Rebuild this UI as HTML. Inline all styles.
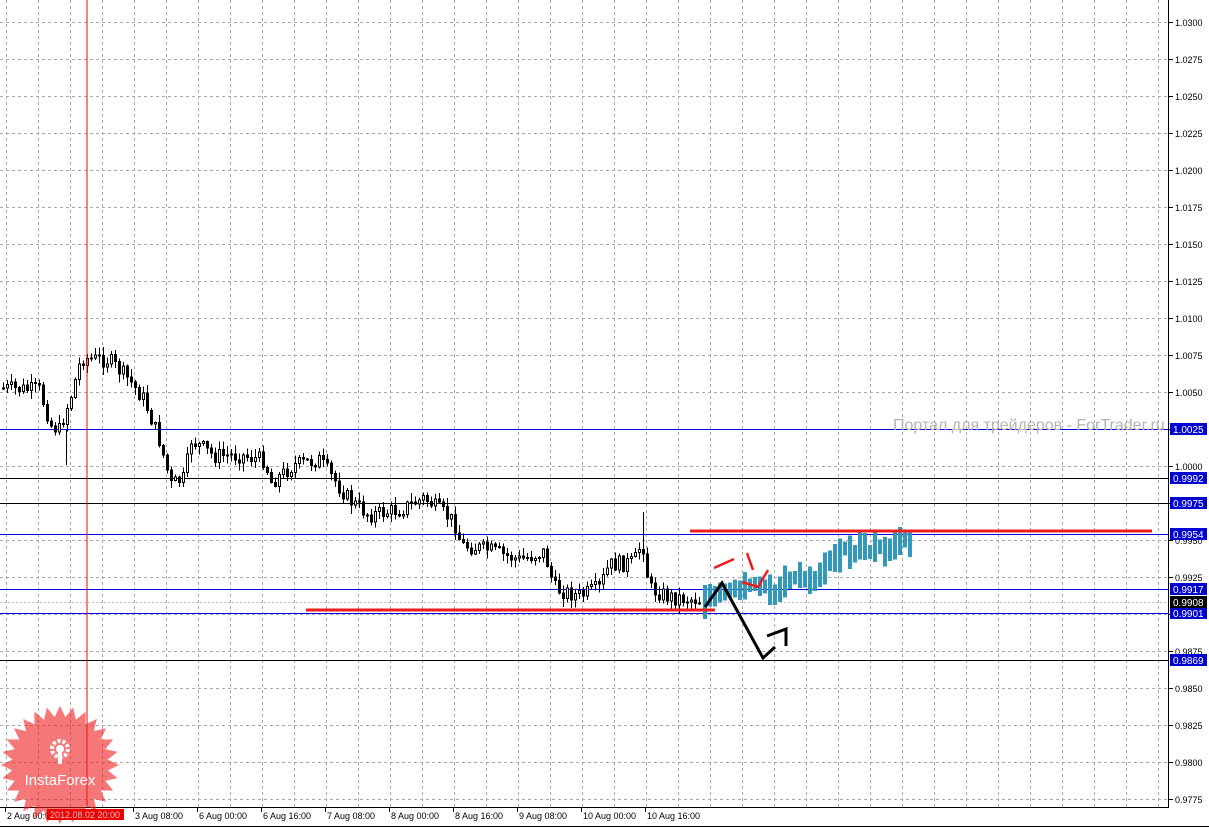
<!DOCTYPE html>
<html><head><meta charset="utf-8"><style>
html,body{margin:0;padding:0;background:#fff;overflow:hidden}
#c{position:absolute;left:0;top:0}
</style></head><body>
<svg id="c" width="1209" height="828" xmlns="http://www.w3.org/2000/svg" font-family="Liberation Sans, sans-serif" shape-rendering="crispEdges">
<rect width="1209" height="828" fill="#fff"/>
<g id="grid" stroke="#a8a8a8" stroke-width="1" stroke-dasharray="3,3"></g>
<g id="hl"></g>
<g id="candles"></g>
<g id="fc"></g>
<text x="893" y="430" font-size="16" fill="#b4b4b4">Портал для трейдеров - ForTrader.ru</text>
<line x1="87" y1="0" x2="87" y2="808" stroke="#ff0000" stroke-width="1.2"/>
<line x1="690" y1="531" x2="1152" y2="531" stroke="#ee1c1c" stroke-width="3"/>
<line x1="306" y1="610" x2="715" y2="610" stroke="#ee1c1c" stroke-width="3"/>
<g shape-rendering="auto">
<polyline points="705,607 722,583 763,658 775,647" fill="none" stroke="#000" stroke-width="3"/>
<polyline points="767,636 786,629 786,646" fill="none" stroke="#000" stroke-width="3"/>
<g stroke="#ee1c1c" stroke-width="2.5" fill="none">
<line x1="714" y1="568" x2="734" y2="559"/>
<line x1="747" y1="553" x2="753" y2="570"/>
<polyline points="742,582 758,587 768,570"/>
</g>
</g>
<line x1="1168.5" y1="0" x2="1168.5" y2="808" stroke="#000"/>
<line x1="0" y1="807.5" x2="1168" y2="807.5" stroke="#000"/>
<line x1="0" y1="826.5" x2="1209" y2="826.5" stroke="#000"/>
<g id="ylab" font-size="9" fill="#000"></g>
<g id="xlab" font-size="9" fill="#000"></g>
<g opacity="0.6" shape-rendering="auto">
<polygon id="star" fill="#ee1c1c"/>
</g>
<g fill="#fff" shape-rendering="auto">
<circle cx="60" cy="749" r="8" fill="none" stroke="#fff" stroke-width="4" stroke-dasharray="3,2"/>
<circle cx="60" cy="749" r="4"/>
<rect x="58" y="752" width="4" height="12"/>
<text x="60" y="785" font-size="15" text-anchor="middle">InstaForex</text>
</g>
<rect x="47" y="809" width="77" height="11" fill="#ee0000"/>
<text x="50" y="818" font-size="9" fill="#f0c0c0">2012.08.02 20:00</text>
</svg>
<script>
var NS="http://www.w3.org/2000/svg";
function el(p,t,a,txt){var e=document.createElementNS(NS,t);for(var k in a)e.setAttribute(k,a[k]);if(txt)e.textContent=txt;document.getElementById(p).appendChild(e);return e;}
function Y(p){return 22+(1.03-p)*14800;}
for(var gx=6;gx<1168;gx+=32)el("grid","line",{x1:gx+.5,y1:0,x2:gx+.5,y2:807});
for(var i=0;i<=21;i++){var p=1.03-i*0.0025,yy=Math.round(Y(p));
 el("grid","line",{x1:0,y1:yy+.5,x2:1168,y2:yy+.5});
 el("ylab","line",{x1:1168,y1:yy+.5,x2:1173,y2:yy+.5,stroke:"#000"});
 el("ylab","text",{x:1175,y:yy+4},p.toFixed(4));}
var lv=[[1.0025,"#0000e0"],[0.9992,"#000000"],[0.9975,"#000000"],[0.9954,"#0000e0"],[0.9917,"#0000e0"],[0.9901,"#0000e0"],[0.9869,"#000000"]];
lv.forEach(function(l){var yy=Math.round(Y(l[0]));
 el("hl","rect",{x:0,y:yy,width:1168,height:1,fill:l[1]});
 el("ylab","rect",{x:1170,y:yy-6,width:37,height:12,fill:"#0000d0"});
 el("ylab","text",{x:1173,y:yy+4,fill:"#fff","font-size":"10"},l[0].toFixed(4));});
var y8=Math.round(Y(0.9908));
el("hl","line",{x1:0,y1:y8+.5,x2:1168,y2:y8+.5,stroke:"#c0c0c0","stroke-dasharray":"2,2"});
el("ylab","rect",{x:1170,y:y8-6,width:37,height:12,fill:"#000"});
el("ylab","text",{x:1173,y:y8+4,fill:"#fff","font-size":"10"},"0.9908");
var xl=[[5,"2 Aug 00:00"],[133,"3 Aug 08:00"],[197,"6 Aug 00:00"],[261,"6 Aug 16:00"],[325,"7 Aug 08:00"],[389,"8 Aug 00:00"],[453,"8 Aug 16:00"],[517,"9 Aug 08:00"],[581,"10 Aug 00:00"],[645,"10 Aug 16:00"]];
xl.forEach(function(a){el("xlab","line",{x1:a[0]+.5,y1:808,x2:a[0]+.5,y2:812,stroke:"#000"});el("xlab","text",{x:a[0]+2,y:819},a[1]);});
var A=[[0,388],[40,390],[52,425],[60,430],[72,395],[82,358],[110,360],[130,380],[145,400],[160,440],[172,485],[185,478],[192,440],[215,456],[240,455],[265,460],[272,482],[295,465],[320,460],[335,480],[350,500],[370,515],[400,510],[425,498],[440,510],[455,522],[462,545],[490,550],[520,560],[545,552],[555,588],[580,596],[600,588],[610,565],[635,562],[643,540],[650,588],[670,597],[700,600]];
function interp(x){for(var i=1;i<A.length;i++)if(x<=A[i][0]){var a=A[i-1],b=A[i],t=(x-a[0])/(b[0]-a[0]);return a[1]+(b[1]-a[1])*t;}return A[A.length-1][1];}
var sd=7;function rnd(){sd=(sd*9301+49297)%233280;return sd/233280;}
var prev=interp(0);
for(var cx0=2;cx0<700;cx0+=4){var cl=interp(cx0+2)+(rnd()-.5)*16,op=prev,tp=Math.min(op,cl),bt=Math.max(op,cl);
 var hi=tp-rnd()*8-1,lo=bt+rnd()*8+1;
 el("candles","line",{x1:cx0+1.5,y1:hi,x2:cx0+1.5,y2:lo,stroke:"#000"});
 var hh=Math.max(bt-tp,1);
 el("candles","rect",{x:cx0+.5,y:tp,width:2,height:hh,fill:cl>op?"#000":"#fff",stroke:"#000","stroke-width":1});
 prev=cl;}
el("candles","line",{x1:643.5,y1:512,x2:643.5,y2:560,stroke:"#000"});
el("candles","line",{x1:66.5,y1:430,x2:66.5,y2:465,stroke:"#000"});
var B=[[702,600],[730,592],[760,585],[775,592],[790,578],[815,578],[830,556],[860,548],[880,550],[895,545],[912,540]];
function bi(x){for(var i=1;i<B.length;i++)if(x<=B[i][0]){var a=B[i-1],b=B[i],t=(x-a[0])/(b[0]-a[0]);return a[1]+(b[1]-a[1])*t;}return B[B.length-1][1];}
for(var bx=703;bx<912;bx+=5){var m=bi(bx)+(rnd()-.5)*8,bh=12+rnd()*22;
 el("fc","rect",{x:bx,y:m-bh/2,width:4,height:bh,fill:"#3399bb"});}
var pts=[],scx=60,scy=765,n=28;
for(var i=0;i<n*2;i++){var r=i%2?48:59,ang=i*Math.PI/n;pts.push((scx+r*Math.cos(ang)).toFixed(1)+","+(scy+r*Math.sin(ang)).toFixed(1));}
document.getElementById("star").setAttribute("points",pts.join(" "));
</script>
</body></html>
